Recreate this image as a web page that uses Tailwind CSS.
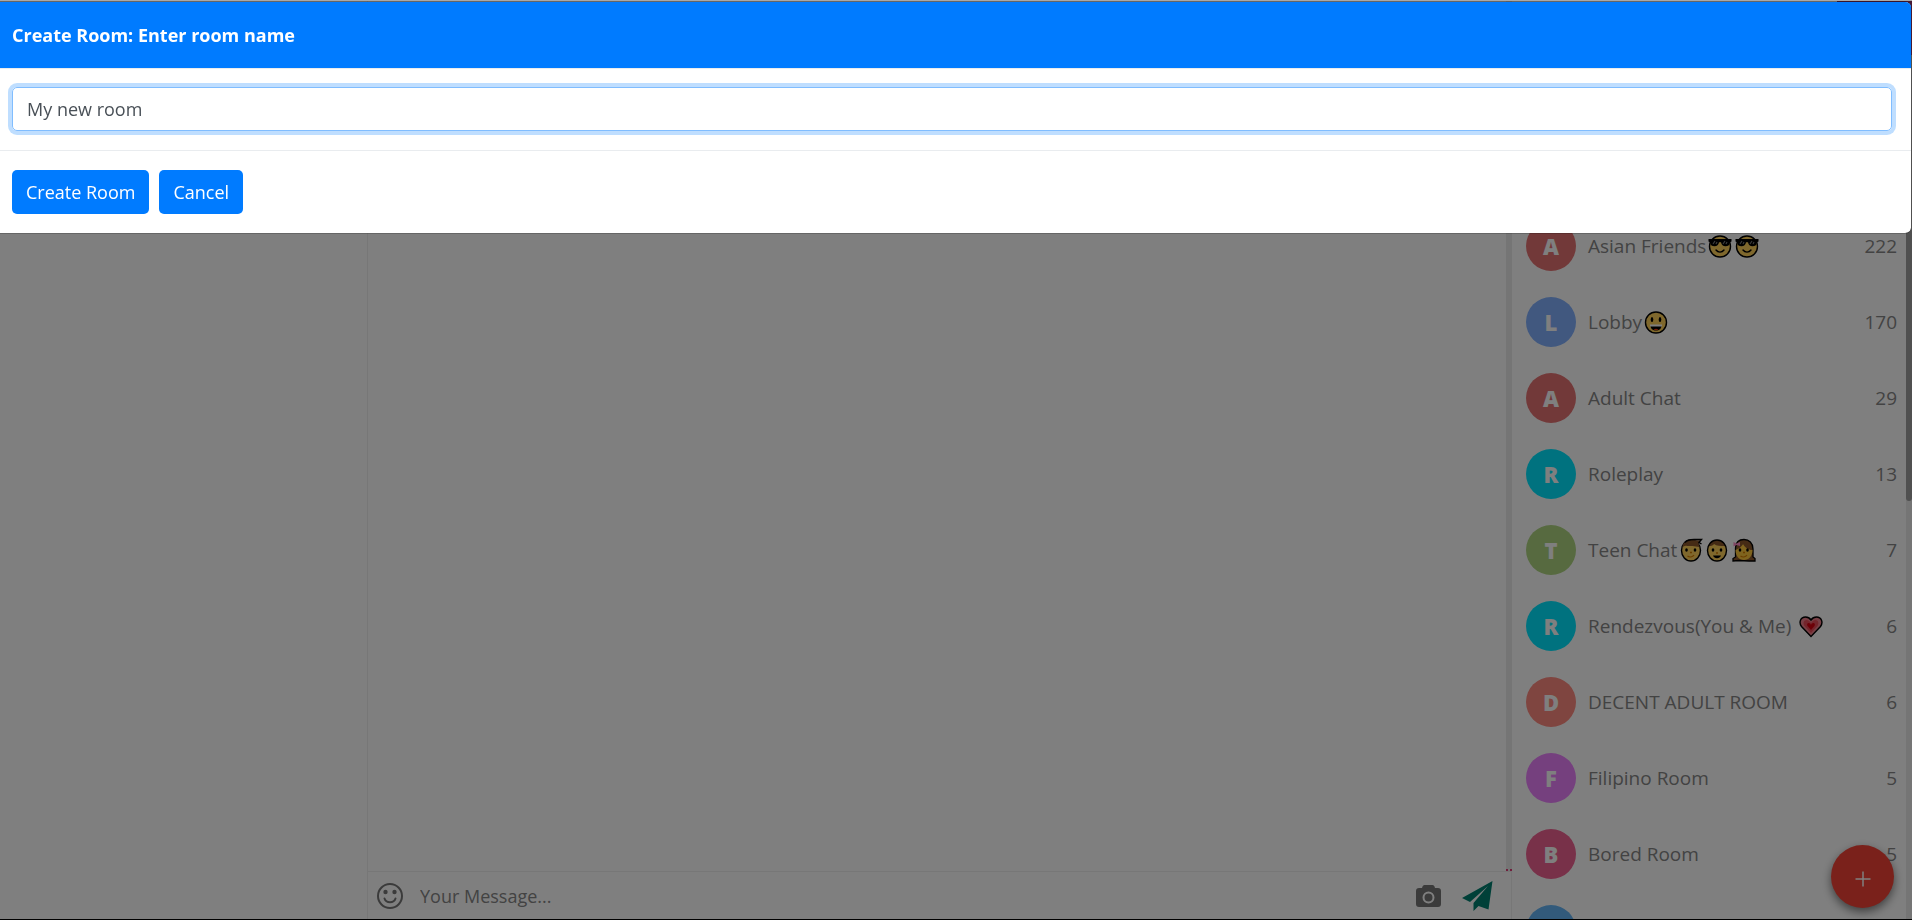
<!DOCTYPE html>
<html lang="en">
<head>
    <meta charset="UTF-8">
    <meta name="viewport" content="width=device-width, initial-scale=1.0">
    <title>Chat Rooms</title>
    <script src="https://cdn.jsdelivr.net/npm/@tailwindcss/browser@4"></script>
</head>
<body class="h-screen overflow-hidden bg-white font-['Open_Sans','Noto_Sans',sans-serif] text-[19px] text-[#868686]">

    <!-- Emoji set -->
    <svg class="hidden">
        <symbol id="cool" viewBox="0 0 24 24">
            <circle cx="12" cy="12.500" r="10.500" fill="#ffc83d" fill-opacity=".85" stroke="#000" stroke-width="1.400"/>
            <path d="M.5 5h23v2.500l-1.500.8c-.5 3-2 4-4.500 4s-4-1.500-4.500-4h-2c-.5 2.500-2 4-4.500 4S2.500 11.300 2 8.300L.5 7.500z" fill="#000"/>
            <path d="M5 10l2-3M8 10l1-2M15 10l2-3M18 10l1-2" stroke="#777" stroke-width="1.200"/>
            <path d="M8 16c2 2.800 6 2.800 8 0" fill="none" stroke="#000" stroke-width="1.400" stroke-linecap="round"/>
        </symbol>
        <symbol id="grin" viewBox="0 0 24 24">
            <circle cx="12" cy="12.500" r="10.500" fill="#ffc83d" fill-opacity=".85" stroke="#000" stroke-width="1.400"/>
            <ellipse cx="8" cy="9.500" rx="1.300" ry="2.500"/>
            <ellipse cx="16" cy="9.500" rx="1.300" ry="2.500"/>
            <path d="M6.500 15h11c0 4-2.300 5.500-5.500 5.500S6.500 19 6.500 15z"/>
            <path d="M6 14.500h12v2H6z" fill="#fff"/>
            <path d="M9.500 19.500q2.500-1.500 5 0-2.500 1.600-5 0z" fill="#f03a17"/>
        </symbol>
        <symbol id="boy" viewBox="0 0 24 24">
            <ellipse cx="12" cy="12.500" rx="9.500" ry="10.500" fill="#ffc83d" fill-opacity=".85" stroke="#000" stroke-width="1.400"/>
            <path d="M3.500 9.500c0-5 4-7.500 9-7.500l9 .5-2 2.500 1 4C16 8 10 8 8 8 6 7.500 4.500 8.500 3.500 9.500z" fill="#8b572a"/>
            <path d="M6 4.500c2-2.500 5-3 9-3h7.500L20 4.500l2.500 1.500" fill="none" stroke="#000" stroke-width="1.400"/>
            <ellipse cx="7.500" cy="12" rx="1.300" ry="1.800"/>
            <ellipse cx="16" cy="12" rx="1.300" ry="1.800"/>
            <path d="M8.500 18c2 1.300 5 1 6.500-.8M11 14.500h2" fill="none" stroke="#d67d00" stroke-width="1.300"/>
        </symbol>
        <symbol id="man" viewBox="0 0 24 24">
            <ellipse cx="12" cy="12.500" rx="9.500" ry="10.500" fill="#ffc83d" fill-opacity=".85"/>
            <path d="M3 10.500C3 5 7 2 12 2s9 3 9 8.500l-1.500-2.500c-4 0-8 0-10.500-2-1 1.500-2.500 2-4.500 2z" fill="#8b572a"/>
            <ellipse cx="12" cy="12.500" rx="9.500" ry="10.500" fill="none" stroke="#000" stroke-width="1.400"/>
            <ellipse cx="8" cy="12" rx="1.300" ry="1.800"/>
            <ellipse cx="16" cy="12" rx="1.300" ry="1.800"/>
            <path d="M11 15h2" stroke="#d67d00" stroke-width="1.300"/>
            <path d="M8 17.500h8c-.8 2-2 2.700-4 2.700s-3.200-.7-4-2.700z"/>
        </symbol>
        <symbol id="girl" viewBox="0 0 24 24">
            <path d="M3.500 10C3.500 4 7 1.500 12 1.500S21 5 21 11v8l2 1.500v2.500h-6L7 22.500l-6 .5v-2.500l2.500-1.500z" fill="#8b572a" stroke="#000" stroke-width="1.300"/>
            <path d="M3.500 12c3-1 6-3 8-6.500 2 4 5 6 9 6.500 0 6-3.500 10-8.500 10s-8.500-4-8.500-10z" fill="#ffc83d"/>
            <path d="M11 4c2 1 6 3 9.500 8-4 0-7.500-2.500-9.500-6z" fill="#8b572a"/>
            <ellipse cx="8" cy="12" rx="1.300" ry="1.800"/>
            <ellipse cx="15.500" cy="12" rx="1.300" ry="1.800"/>
            <path d="M8.500 18c2 1.300 5 1 6.500-.8M11 14.500h2" fill="none" stroke="#d67d00" stroke-width="1.300"/>
            <path d="M1.500 4l3 1.500L8 4v4L4.500 7l-3 1.500z" fill="#ff8ac5"/>
        </symbol>
        <symbol id="heart" viewBox="0 0 24 24">
            <path d="M12 22.500L2.500 12.500C-.5 8.500 1.500 3 6.500 3 9 3 11 4.500 12 6c1-1.500 3-3 5.500-3 5 0 7 5.500 4 9.500z" fill="#f0808c" stroke="#000" stroke-width="1.400"/>
            <path d="M12 19l-6.500-7C3.500 9 5 6 7.500 6c2 0 3.500 1.500 4.500 3 1-1.500 2.500-3 4.500-3C19 6 20.500 9 18.500 12z" fill="#e84a58"/>
            <path d="M12 16l-3.500-4c-1-1.700 0-3 1.200-3 1 0 1.800 1 2.300 1.800.5-.8 1.300-1.800 2.300-1.800 1.200 0 2.200 1.300 1.200 3z" fill="#d8000f"/>
        </symbol>
    </svg>

    <div class="flex h-full border-b border-black">
        <!-- Left panel -->
        <aside class="w-92 shrink-0 border-r border-[#efefef]"></aside>

        <!-- Conversation -->
        <main class="flex min-w-0 flex-1 flex-col">
            <div class="flex flex-1 justify-end">
                <div class="flex w-1.5 items-end justify-between bg-[#ebebeb]">
                    <span class="size-0.5 bg-[#e0407a]"></span>
                    <span class="size-0.5 bg-[#e0407a]"></span>
                </div>
            </div>
            <form class="flex h-12 items-center border-t border-r border-[#efefef] pr-[18px] pl-2">
                <button type="button" aria-label="Emoji" class="text-[#777]">
                    <svg class="size-7" viewBox="0 0 28 28" fill="none" stroke="currentColor" stroke-width="2">
                        <circle cx="14" cy="14" r="12"/>
                        <circle cx="9.500" cy="10" r="2.200" fill="currentColor" stroke="none"/>
                        <circle cx="18.500" cy="10" r="2.200" fill="currentColor" stroke="none"/>
                        <path d="M8.500 16.500c1.500 5 9.500 5 11 0" stroke-linecap="round"/>
                    </svg>
                </button>
                <input type="text" aria-label="Message" placeholder="Your Message..." class="ml-4 min-w-0 flex-1 text-lg placeholder:text-[#868686] outline-none">
                <button type="button" aria-label="Photo" class="mr-5 text-[#777]">
                    <svg class="h-6 w-[25px]" viewBox="0 0 25 24" fill="currentColor">
                        <path fill-rule="evenodd" d="M8.500 1h8a2 2 0 0 1 2 1.500l.5 1.500h3a3 3 0 0 1 3 3v13a3 3 0 0 1-3 3H3a3 3 0 0 1-3-3V7a3 3 0 0 1 3-3h3l.5-1.500A2 2 0 0 1 8.500 1zm4 6.500a6 6 0 1 0 0 12 6 6 0 0 0 0-12zm0 2a4 4 0 1 1 0 8 4 4 0 0 1 0-8z"/>
                    </svg>
                </button>
                <button type="submit" aria-label="Send" class="text-[#008070]">
                    <svg class="size-8" viewBox="0 0 32 32" fill="currentColor">
                        <path d="M31.500 1L1 18l8 4L27 6 12.500 23v8l5-5 10 3.500z"/>
                    </svg>
                </button>
            </form>
        </main>

        <!-- Room list -->
        <section class="flex w-100 shrink-0 overflow-hidden">
            <ul class="min-w-0 flex-1 pt-52">
                <li class="flex h-19 items-center pr-[9px] pl-3.5">
                    <span class="mr-3 flex size-12.5 items-center justify-center rounded-full bg-[#e57373] text-[22px] font-extrabold text-white">A</span>
                    <a href="#" class="flex items-center">Asian Friends<svg class="ml-0.5 size-6"><use href="#cool"/></svg><svg class="ml-[3px] size-6"><use href="#cool"/></svg></a>
                    <span class="ml-auto">222</span>
                </li>
                <li class="flex h-19 items-center pr-[9px] pl-3.5">
                    <span class="mr-3 flex size-12.5 items-center justify-center rounded-full bg-[#82b1ff] text-[22px] font-extrabold text-white">L</span>
                    <a href="#" class="flex items-center">Lobby<svg class="ml-0.5 size-6"><use href="#grin"/></svg></a>
                    <span class="ml-auto">170</span>
                </li>
                <li class="flex h-19 items-center pr-[9px] pl-3.5">
                    <span class="mr-3 flex size-12.5 items-center justify-center rounded-full bg-[#e57373] text-[22px] font-extrabold text-white">A</span>
                    <a href="#">Adult Chat</a>
                    <span class="ml-auto">29</span>
                </li>
                <li class="flex h-19 items-center pr-[9px] pl-3.5">
                    <span class="mr-3 flex size-12.5 items-center justify-center rounded-full bg-[#00e5ff] text-[22px] font-extrabold text-white">R</span>
                    <a href="#">Roleplay</a>
                    <span class="ml-auto">13</span>
                </li>
                <li class="flex h-19 items-center pr-[9px] pl-3.5">
                    <span class="mr-3 flex size-12.5 items-center justify-center rounded-full bg-[#aed581] text-[22px] font-extrabold text-white">T</span>
                    <a href="#" class="flex items-center">Teen Chat<svg class="ml-0.5 size-6"><use href="#boy"/></svg><svg class="ml-0.5 size-6"><use href="#man"/></svg><svg class="ml-[3px] size-6"><use href="#girl"/></svg></a>
                    <span class="ml-auto">7</span>
                </li>
                <li class="flex h-19 items-center pr-[9px] pl-3.5">
                    <span class="mr-3 flex size-12.5 items-center justify-center rounded-full bg-[#00e5ff] text-[22px] font-extrabold text-white">R</span>
                    <a href="#" class="flex items-center">Rendezvous(You &amp; Me)<svg class="ml-2 size-6"><use href="#heart"/></svg></a>
                    <span class="ml-auto">6</span>
                </li>
                <li class="flex h-19 items-center pr-[9px] pl-3.5">
                    <span class="mr-3 flex size-12.5 items-center justify-center rounded-full bg-[#ff8a80] text-[22px] font-extrabold text-white">D</span>
                    <a href="#">DECENT ADULT ROOM</a>
                    <span class="ml-auto">6</span>
                </li>
                <li class="flex h-19 items-center pr-[9px] pl-3.5">
                    <span class="mr-3 flex size-12.5 items-center justify-center rounded-full bg-[#ea80fc] text-[22px] font-extrabold text-white">F</span>
                    <a href="#">Filipino Room</a>
                    <span class="ml-auto">5</span>
                </li>
                <li class="flex h-19 items-center pr-[9px] pl-3.5">
                    <span class="mr-3 flex size-12.5 items-center justify-center rounded-full bg-[#f06292] text-[22px] font-extrabold text-white">B</span>
                    <a href="#">Bored Room</a>
                    <span class="ml-auto">5</span>
                </li>
                <li class="flex h-19 items-center pr-[9px] pl-3.5">
                    <span class="mr-3 size-12.5 rounded-full bg-[#64b5f6]"></span>
                </li>
            </ul>
            <!-- Scrollbar -->
            <div class="w-1.5 bg-[#ebebeb]">
                <div class="h-[501px] rounded-full bg-[#a0a0a0]"></div>
            </div>
        </section>
    </div>

    <!-- Active tab -->
    <div class="fixed top-0 right-0 h-[55px] w-[75px] bg-[#8c3468]"></div>

    <button type="button" aria-label="New room" class="fixed right-[18px] bottom-3 flex size-[63px] items-center justify-center rounded-full bg-[#f44336] text-white shadow-[0_4px_10px_rgba(0,0,0,0.5)]">
        <svg class="mt-1 size-4" viewBox="0 0 16 16" stroke="currentColor" stroke-width="1.500"><path d="M8 .5v15M.5 8h15"/></svg>
    </button>

    <!-- Create room dialog -->
    <div class="fixed inset-0 border-t border-[#a8a8a8] bg-black/50">
        <form role="dialog" aria-labelledby="dialog-title" class="mr-px overflow-hidden rounded-r-md border-y border-black/20 bg-white bg-clip-padding">
            <header class="border-b border-[#e9ecef] bg-[#007bff] px-3 py-[18px]">
                <h1 id="dialog-title" class="text-lg/[30px] font-bold text-white">Create Room: Enter room name</h1>
            </header>
            <div class="pt-[18px] pr-[19px] pb-[19px] pl-3">
                <input type="text" aria-label="Room name" value="My new room" class="block h-11 w-full rounded-[5px] border border-[#80bdff] px-3.5 text-lg text-[#495057] ring-4 ring-[#007bff]/25 outline-none">
            </div>
            <footer class="flex gap-2.5 border-t border-[#e9ecef] px-3 py-[19px]">
                <button type="submit" class="h-11 rounded-[5px] bg-[#007bff] px-3.5 text-lg text-white">Create Room</button>
                <button type="button" class="h-11 rounded-[5px] bg-[#007bff] px-3.5 text-lg text-white">Cancel</button>
            </footer>
        </form>
    </div>
</body>
</html>
